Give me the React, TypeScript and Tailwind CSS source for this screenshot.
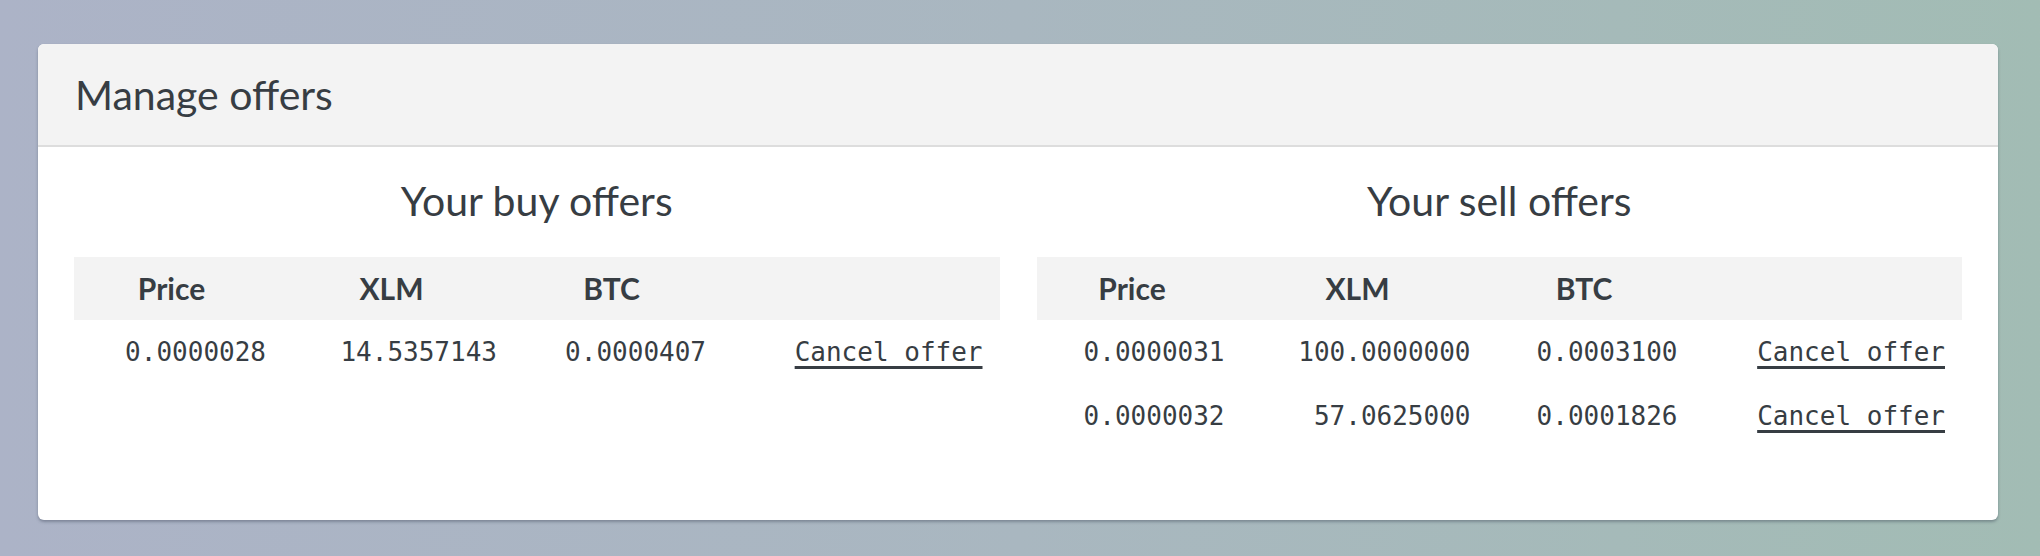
type Offer = { price: string; amount: string; total: string };

const BUY_OFFERS: Offer[] = [{ price: '0.0000028', amount: '14.5357143', total: '0.0000407' }];

const SELL_OFFERS: Offer[] = [
  { price: '0.0000031', amount: '100.0000000', total: '0.0003100' },
  { price: '0.0000032', amount: '57.0625000', total: '0.0001826' },
];

function OffersTable({ title, offers, cols }: { title: string; offers: Offer[]; cols: string }) {
  return (
    <div className="flex flex-col">
      <h2 className="m-0 text-center font-['Lato',sans-serif] text-[41px] leading-[48px] font-normal text-[#373d43]">
        {title}
      </h2>

      {/* Header row */}
      <div className={`mt-8 grid h-[63px] items-center bg-[#f3f3f3] font-['Lato',sans-serif] text-[30px] font-bold text-[#373d43] ${cols}`}>
        <span className="pr-[14px] text-center">Price</span>
        <span className="pr-[14px] text-center">XLM</span>
        <span className="pr-[14px] text-center">BTC</span>
        <span />
      </div>

      {/* Offer rows */}
      {offers.map((offer) => (
        <div
          key={offer.price}
          className={`grid h-[64px] items-center font-['DejaVu_Sans_Mono',monospace] text-[26px] leading-[64px] text-[#373d43] ${cols}`}
        >
          <span className="pr-[17px] text-right">{offer.price}</span>
          <span className="pr-[17px] text-right">{offer.amount}</span>
          <span className="pr-[17px] text-right">{offer.total}</span>
          <span className="pr-[17px] text-right">
            <a href="#" className="text-[#373d43] underline decoration-[3px] underline-offset-[5px]">
              Cancel offer
            </a>
          </span>
        </div>
      ))}
    </div>
  );
}

export default function App() {
  return (
    <div className="h-[556px] w-full bg-linear-to-r from-[#acb3c7] via-[#a9b7c0] to-[#a2bcb4] pt-[44px]">
      <div className="ml-[38px] w-[1960px] overflow-hidden rounded-[6px] bg-white shadow-[0_2px_3px_rgba(40,50,70,0.35)]">
        <div className="flex h-[103px] items-center border-b-2 border-[#dddddd] bg-[#f3f3f3] px-[37px] pt-[1px]">
          <h1 className="m-0 font-['Lato',sans-serif] text-[41px] leading-[48px] font-normal text-[#373d43]">
            Manage offers
          </h1>
        </div>

        <div className="grid grid-cols-2 gap-[37px] px-[36px] pt-[30px] pb-[72px]">
          <OffersTable title="Your buy offers" offers={BUY_OFFERS} cols="grid-cols-[209px_231px_209px_1fr]" />
          <OffersTable title="Your sell offers" offers={SELL_OFFERS} cols="grid-cols-[205px_246px_207px_1fr]" />
        </div>
      </div>
    </div>
  );
}
